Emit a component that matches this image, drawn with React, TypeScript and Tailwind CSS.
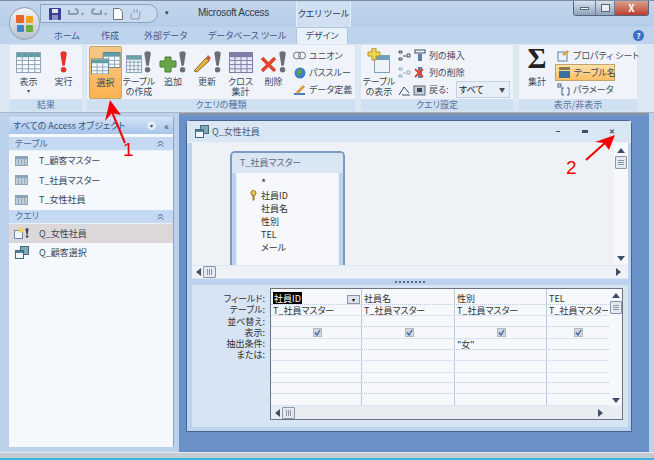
import React from "react";

const font = { fontFamily: '"Noto Sans CJK JP", "Liberation Sans", sans-serif' };

function GridIcon({ w = 25, h = 21, head = "#5f9ea6", line = "#8fa4b8", fill = "#f7fafc" }: { w?: number; h?: number; head?: string; line?: string; fill?: string }) {
  const cols = [0.25, 0.5, 0.75].map((f) => f * w);
  const rows = [0.4, 0.6, 0.8].map((f) => f * h);
  return (
    <svg width={w} height={h} viewBox={`0 0 ${w} ${h}`}>
      <rect x="0.5" y="0.5" width={w - 1} height={h - 1} fill={fill} stroke={line} />
      <rect x="1" y="1" width={w - 2} height={h * 0.2} fill={head} />
      {cols.map((x) => <line key={x} x1={x} x2={x} y1={1} y2={h - 1} stroke={line} />)}
      {rows.map((y) => <line key={y} x1={1} x2={w - 1} y1={y} y2={y} stroke={line} />)}
    </svg>
  );
}

function Bang({ color = "#6b6f78", h = 22 }: { color?: string; h?: number }) {
  return (
    <svg width={h / 2.4} height={h} viewBox="0 0 10 24">
      <path d="M1.5 3 C1.5 -0.5 8.5 -0.5 8.5 3 L6.3 16 H3.7 Z" fill={color} />
      <circle cx="5" cy="20.5" r="3" fill={color} />
    </svg>
  );
}

function SelectIcon({ size = 30 }: { size?: number }) {
  return (
    <svg width={size} height={size * 0.75} viewBox="0 0 32 24">
      <rect x="13" y="0.5" width="18" height="16" fill="#f7fafc" stroke="#59808c" />
      <rect x="13" y="1" width="18" height="4" fill="#5f9ea6" />
      <path d="M19 5V17M25 5V17M13 9H31M13 13H31" stroke="#8fa4b8" />
      <rect x="0.5" y="7.5" width="18" height="16" fill="#f7fafc" stroke="#59808c" />
      <rect x="1" y="8" width="17" height="4" fill="#5f9ea6" />
      <path d="M6.5 12V24M12.5 12V24M1 16H18M1 20H18" stroke="#8fa4b8" />
    </svg>
  );
}

function Big({ w, label, icon, sub, active }: { w: number; label: React.ReactNode; icon: React.ReactNode; sub?: boolean; active?: boolean }) {
  return (
    <div
      style={{ width: w }}
      className={`h-[53px] flex flex-col items-center shrink-0 rounded-[2px] ${active ? "bg-gradient-to-b from-[#f6c887] to-[#fbb24f] border border-[#c2a56a]" : ""}`}
    >
      <div className="h-[27px] flex items-end justify-center gap-px">{icon}</div>
      <div className="text-[9px] leading-[10px] text-[#3d4a5c] text-center mt-[4px] whitespace-pre">{label}</div>
      {sub && <div className="text-[6px] leading-[6px] mt-[1px] text-[#3d4a5c]">▾</div>}
    </div>
  );
}

function Group({ w, label, children, ml = 0 }: { w: number; label: string; children: React.ReactNode; ml?: number }) {
  return (
    <div style={{ width: w, marginLeft: ml }} className="h-[68px] flex flex-col bg-[#f0f4fa] rounded-[2px] border border-[#dbe5f2] shrink-0">
      <div className="flex-1 flex items-start pt-px min-h-0">{children}</div>
      <div className="h-[12px] bg-[#d0e0f3] text-[9px] leading-[12px] text-center text-[#56709a]">{label}</div>
    </div>
  );
}

function SmallRow({ icon, label, className = "" }: { icon: React.ReactNode; label: string; className?: string }) {
  return (
    <div className={`flex items-center gap-[3px] h-[17px] text-[9px] text-[#3d4a5c] whitespace-nowrap ${className}`}>
      <span className="w-[13px] h-[13px] flex items-center justify-center shrink-0">{icon}</span>
      {label}
    </div>
  );
}

function Section({ label }: { label: string }) {
  return (
    <div className="h-[14px] bg-[#c5daf2] flex items-center justify-between pl-[6px] pr-[9px] text-[9px] text-[#4a6a9a] border-b border-white/60">
      {label}
      <svg width="7" height="7" viewBox="0 0 7 7" fill="none" stroke="#3b5a8a"><path d="M1 3.5L3.5 1L6 3.5M1 6.5L3.5 4L6 6.5" /></svg>
    </div>
  );
}

function NavItem({ label, icon, active, pl = 24 }: { label: string; icon?: React.ReactNode; active?: boolean; pl?: number }) {
  return (
    <div className={`h-[19.5px] flex items-center text-[9px] text-[#3a4658] ${active ? "bg-[#dcd8da]" : ""}`}>
      <span style={{ width: pl + 6 }} className="flex justify-center shrink-0 pr-[5px]">{icon}</span>
      {label}
    </div>
  );
}

function MiniWin() {
  return (
    <svg width="14" height="13" viewBox="0 0 14 13">
      <rect x="5.5" y="0.5" width="8" height="8" fill="#7fa9b8" stroke="#446a80" />
      <rect x="0.5" y="4.5" width="8" height="8" fill="#f5f8fb" stroke="#446a80" />
      <rect x="1" y="5" width="7" height="2" fill="#4f7f94" />
    </svg>
  );
}

function Key() {
  return (
    <svg width="7" height="11" viewBox="0 0 7 11">
      <circle cx="3.5" cy="3" r="2.6" fill="#e7c65a" stroke="#9a7d24" />
      <path d="M3.5 5V10.5" stroke="#9a7d24" strokeWidth="2" />
    </svg>
  );
}

function Check() {
  return (
    <div className="w-[9px] h-[9px] bg-[#d3d6dc] border border-[#b3b7c0] flex items-center justify-center">
      <svg width="7" height="7" viewBox="0 0 7 7" fill="none" stroke="#3a62a8" strokeWidth="1.3"><path d="M1 3.5L3 6L6 1" /></svg>
    </div>
  );
}

function Thumb({ vertical }: { vertical?: boolean }) {
  return (
    <div className={`bg-[#e4e9f1] border border-[#8b97a8] rounded-[1px] flex items-center justify-center ${vertical ? "w-[12px] h-[13px] flex-col gap-px" : "w-[13px] h-[12px] gap-px"}`}>
      {[0, 1, 2].map((i) => <span key={i} className={vertical ? "w-[6px] h-px bg-[#8b97a8]" : "h-[6px] w-px bg-[#8b97a8]"} />)}
    </div>
  );
}

const Tri = ({ d }: { d: "l" | "r" | "u" | "d" }) => {
  const p = { l: "M6 0V8L1 4Z", r: "M2 0V8L7 4Z", u: "M0 6H8L4 1Z", d: "M0 2H8L4 7Z" }[d];
  return <svg width="8" height="8" viewBox="0 0 8 8"><path d={p} fill="#3f4f6b" /></svg>;
};

const rows = [
  ["社員ID", "社員名", "性別", "TEL"],
  ["T_社員マスター", "T_社員マスター", "T_社員マスター", "T_社員マスター"],
];
const labels = ["フィールド:", "テーブル:", "並べ替え:", "表示:", "抽出条件:", "または:"];
const colW = [91, 93, 92, 61];

function Cells({ h, children, dotted }: { h: number; children?: (i: number) => React.ReactNode; dotted?: boolean }) {
  return (
    <div style={{ height: h }} className={`flex border-b ${dotted ? "border-dotted border-[#b9c9e0]" : "border-[#d7e3f3]"}`}>
      {colW.map((w, i) => (
        <div key={i} style={{ width: w }} className="shrink-0 border-r border-[#b7cbe4] last:border-r-0 relative overflow-hidden whitespace-nowrap pl-[2px] text-[9px] leading-[11px] text-[#333]">
          {children?.(i)}
        </div>
      ))}
    </div>
  );
}

export default function App() {
  return (
    <div style={font} className="relative w-[654px] h-[460px] overflow-hidden bg-[#bcd2ec] flex flex-col [font-feature-settings:'palt']">
      {/* title bar */}
      <div className="h-[27px] shrink-0 flex items-start border-t border-[#7c8ea6] bg-gradient-to-b from-[#c3d6ec] to-[#b5cde9]">
        <div className="ml-[40px] mt-[3px] w-[118px] h-[19px] rounded-r-full border border-[#8ba3c2] bg-[#c9daee] flex items-center gap-[6px] pl-[8px]">
          <svg width="12" height="12" viewBox="0 0 12 12"><rect width="12" height="12" rx="1" fill="#3a3f96" /><rect x="3" y="1" width="6" height="4" fill="#dfe6f2" /><rect x="3" y="7" width="6" height="5" fill="#8a90c8" /></svg>
          <svg width="13" height="11" viewBox="0 0 13 11" fill="none" stroke="#8a9cb5" strokeWidth="2"><path d="M2 2V6H8M8 6C12 6 12 1 8 1" /></svg>
          <span className="text-[6px] text-[#8a9cb5] -ml-[5px]">▾</span>
          <svg width="13" height="11" viewBox="0 0 13 11" fill="none" stroke="#8a9cb5" strokeWidth="2"><path d="M11 2V6H5M5 6C1 6 1 1 5 1" /></svg>
          <span className="text-[6px] text-[#8a9cb5] -ml-[5px]">▾</span>
          <svg width="10" height="12" viewBox="0 0 10 12"><path d="M.5.5H6.5L9.5 3.5V11.5H.5Z" fill="#fbfcfd" stroke="#6b7686" /></svg>
          <svg width="13" height="12" viewBox="0 0 13 12" fill="none" stroke="#8a9cb5"><path d="M2 5L2 11H10L11 3M5 5V1M8 5V1" /></svg>
        </div>
        <span className="text-[7px] text-[#2f3e55] ml-[7px] mt-[6px]">▾</span>
        <div className="w-[71px] ml-[29px] mt-[4px] text-[10px] leading-[16px] tracking-[-0.25px] text-[#2d3b4f] whitespace-nowrap" style={{ fontFamily: '"Liberation Sans", sans-serif' }}>Microsoft Access</div>
        <div className="ml-[27px] w-[55px] h-[26px] mt-px bg-[#d0dff1] border-x border-[#e6eef8] text-[9px] leading-[24px] text-center text-[#2d3b4f] whitespace-nowrap">クエリ ツール</div>
        <div className="ml-[222px] w-[76px] h-[15px] flex rounded-b-[3px] overflow-hidden border border-t-0 border-[#56657a]">
          <div className="w-[22px] bg-gradient-to-b from-[#d7e1ec] to-[#8fa3bc] flex items-center justify-center border-r border-[#6d7d92]"><span className="w-[9px] h-[3px] bg-white border border-[#56657a]" /></div>
          <div className="w-[19px] bg-gradient-to-b from-[#d7e1ec] to-[#8fa3bc] flex items-center justify-center border-r border-[#6d7d92]"><span className="w-[9px] h-[8px] bg-white/70 border border-[#56657a]" /></div>
          <div className="flex-1 bg-gradient-to-b from-[#d9a090] to-[#bb3a2c] flex items-center justify-center text-white text-[10px] leading-none font-bold">X</div>
        </div>
      </div>

      {/* tabs */}
      <div className="h-[17px] shrink-0 flex items-center text-[9px] text-[#3c5a8c] bg-[#bfd3ec] relative whitespace-nowrap">
        <span className="ml-[54px] w-[24px]">ホーム</span>
        <span className="ml-[23px] w-[19px]">作成</span>
        <span className="ml-[24px] w-[42px]">外部データ</span>
        <span className="ml-[22px] w-[72px]">データベース ツール</span>
        <div className="ml-[16px] w-[52px] h-[17px] bg-[#e8f0f8] border border-b-0 border-[#b0c6de] rounded-t-[2px] text-center leading-[16px] text-[#2f4a75]">デザイン</div>
        <div className="ml-auto mr-[10px] w-[11px] h-[11px] rounded-full bg-[#3a70c4] text-white text-[8px] leading-[11px] text-center font-bold">?</div>
      </div>

      {/* ribbon */}
      <div className="h-[69px] shrink-0 flex pl-[9px] bg-[#dde8f5] border-b border-[#a9b5c4]">
        <Group w={74} label="結果">
          <Big w={37} sub label="表示" icon={<GridIcon />} />
          <Big w={33} label="実行" icon={<Bang color="#e4332a" />} />
        </Group>
        <Group w={270} ml={3} label="クエリの種類">
          <div className="w-[2px]" />
          <Big w={33} active label="選択" icon={<SelectIcon />} />
          <Big w={34} label={"テーブル\nの作成"} icon={<><GridIcon w={16} h={18} /><Bang /></>} />
          <Big w={34} label="追加" icon={<><svg width="18" height="18" viewBox="0 0 18 18"><path d="M6 2H12V6H17V12H12V17H6V12H1V6H6Z" fill="#69a84a" stroke="#4a7d31" /></svg><Bang /></>} />
          <Big w={34} label="更新" icon={<><svg width="20" height="20" viewBox="0 0 20 20"><path d="M2 18L14 5L17 8L5 19Z" fill="#e6b53f" stroke="#8a6a20" /><path d="M14 5L16 2L19 5L17 8Z" fill="#d05a4a" /></svg><Bang /></>} />
          <Big w={33} label={"クロス\n集計"} icon={<GridIcon w={24} h={21} head="#7d7fa8" fill="#eceaf3" line="#7d7fa8" />} />
          <Big w={33} label="削除" icon={<><svg width="17" height="17" viewBox="0 0 17 17"><path d="M2 2L15 15M15 2L2 15" stroke="#e0452e" strokeWidth="3.5" /></svg><Bang /></>} />
          <div className="flex flex-col pt-[1px] ml-[3px]">
            <SmallRow label="ユニオン" icon={<svg width="13" height="9" fill="none" stroke="#6b7686"><circle cx="4" cy="4.5" r="3.5" /><circle cx="9" cy="4.5" r="3.5" /></svg>} />
            <SmallRow label="パススルー" icon={<svg width="12" height="12"><circle cx="6" cy="6" r="5.5" fill="#3d7fc4" /><path d="M3 3L7 2L8 6L4 9Z" fill="#5fa848" /></svg>} />
            <SmallRow label="データ定義" icon={<svg width="13" height="12"><path d="M1 11H12V9H1Z" fill="#3d7fc4" /><path d="M3 8L10 1L12 3L5 10Z" fill="#d89a3a" /></svg>} />
          </div>
        </Group>
        <Group w={154} ml={4} label="クエリ設定">
          <Big w={36} label={"テーブル\nの表示"} icon={<svg width="24" height="25" viewBox="0 0 24 25"><rect x="7.5" y="7.5" width="15" height="17" fill="#eef3f8" stroke="#7ea0b8" /><rect x="8" y="8" width="14" height="4" fill="#6f9fc0" /><path d="M5 0H9V4H13V8H9V12H5V8H1V4H5Z" fill="#f2d44e" stroke="#b29326" /></svg>} />
          <div className="flex flex-col pt-[1px]">
            <div className="flex">
              <div className="w-[15px] flex flex-col">
                {[0, 1, 2].map((i) => <span key={i} className="h-[17px] flex items-center justify-center">
                  <svg width="13" height="12" viewBox="0 0 13 12" fill="none" stroke={i === 1 ? "#9aa9bb" : "#3d4a5c"}>{i === 2 ? <path d="M1 11L6 3L11 9M4 11H12" /> : <path d="M1 1H4V3H1ZM1 8H4V10H1ZM5 6H8M9 4H12V7H9Z" />}</svg>
                </span>)}
              </div>
              <div className="flex flex-col">
                <SmallRow className="ml-[1px]" label="列の挿入" icon={<svg width="12" height="13" viewBox="0 0 12 13"><rect x="1" y="1" width="10" height="3" fill="none" stroke="#3d4a5c" /><rect x="4" y="5" width="4" height="7" fill="#5b7fae" /></svg>} />
                <SmallRow className="ml-[1px]" label="列の削除" icon={<svg width="12" height="13" viewBox="0 0 12 13"><rect x="4" y="1" width="4" height="11" fill="#5b7fae" /><path d="M1 3L9 11M9 3L1 11" stroke="#e0452e" strokeWidth="2" /></svg>} />
                <div className="flex items-center h-[17px]">
                  <SmallRow className="ml-[1px] w-[36px]" label="戻る:" icon={<svg width="13" height="12" viewBox="0 0 13 12"><rect x="1" y="2" width="11" height="9" fill="#c5ced8" stroke="#5c6a7c" /><rect x="4" y="4" width="5" height="4" fill="#3d4a5c" /></svg>} />
                  <div className="ml-[7px] w-[54px] h-[17px] bg-[#e6eef8] border border-[#c1d2e8] flex items-center justify-between pl-[2px] pr-[4px] text-[9px] text-[#222]">すべて<span className="text-[6px] text-[#3d4a5c]">▼</span></div>
                </div>
              </div>
            </div>
          </div>
        </Group>
        <Group w={120} ml={4} label="表示/非表示">
          <Big w={36} label="集計" icon={<span className="text-[29px] leading-[29px] text-[#222] font-bold" style={{ fontFamily: '"Liberation Serif", serif' }}>Σ</span>} />
          <div className="flex flex-col pt-[1px]">
            <SmallRow className="px-[2px]" label="プロパティ シート" icon={<svg width="13" height="13" viewBox="0 0 13 13"><rect x="1" y="3" width="9" height="9" fill="#eef3f8" stroke="#5c7fa8" /><path d="M5 5L11 1L12 3L7 7Z" fill="#d8a63a" /></svg>} />
            <SmallRow className="px-[2px] w-[60px] bg-gradient-to-b from-[#fce0a8] to-[#fbbf63] border border-[#c2a56a]" label="テーブル名" icon={<svg width="13" height="13" viewBox="0 0 13 13"><rect x="1" y="5" width="11" height="7" fill="#3d6f9e" /><rect x="1" y="1" width="11" height="3" fill="#8a7a50" /></svg>} />
            <SmallRow className="px-[2px]" label="パラメータ" icon={<svg width="13" height="13" viewBox="0 0 13 13" fill="none" stroke="#3d5a8a"><rect x="1" y="1" width="3" height="3" /><path d="M7 5H5V12H7M10 5H12V12H10" /></svg>} />
          </div>
        </Group>
      </div>

      {/* body */}
      <div className="flex-1 flex pl-[9px] min-h-0 bg-[#bcd2ec]">
        <div className="w-[165px] mt-[4px] h-[330px] bg-[#f5f8fc] border-r border-[#8aa3c4] flex flex-col shrink-0">
          <div className="h-[17px] bg-gradient-to-b from-[#d3e3f6] to-[#a8c5ea] flex items-center text-[9px] text-[#38557f] pl-[4px] whitespace-nowrap">
            すべての Access オブジェクト
            <span className="ml-auto w-[9px] h-[9px] rounded-full bg-[#e2ebf6] text-[6px] leading-[9px] text-center text-[#33466a]">▾</span>
            <span className="ml-[8px] mr-[4px] text-[10px] text-[#33466a]">«</span>
          </div>
          <div className="h-[3px]" />
          <Section label="テーブル" />
          <NavItem label="T_顧客マスター" icon={<GridIcon w={13} h={10} head="#8aa3bd" />} />
          <NavItem label="T_社員マスター" icon={<GridIcon w={13} h={10} head="#8aa3bd" />} />
          <NavItem label="T_女性社員" icon={<GridIcon w={13} h={10} head="#8aa3bd" />} />
          <Section label="クエリ" />
          <NavItem active label="Q_女性社員" pl={24} icon={<span className="flex items-center gap-px"><svg width="10" height="12" viewBox="0 0 10 12"><rect x=".5" y="3.5" width="8" height="8" fill="#f3f6fa" stroke="#6b86a6" /><circle cx="7" cy="3" r="2.6" fill="#f0d860" /></svg><Bang color="#3c4350" h={10} /></span>} />
          <NavItem label="Q_顧客選択" icon={<MiniWin />} />
        </div>

        <div className="flex-1 flex flex-col min-w-0 ml-[5px]">
          <div className="flex-1 min-h-0 bg-[#6a90c8] pl-[7px] pt-[5px] pr-[17px] mr-[5px] border-t-2 border-[#8892a0]">
            <div className="h-[312px] bg-[#dce8f5] border border-[#47628c] rounded-t-[5px] flex flex-col">
              <div className="h-[22px] shrink-0 bg-[#d9e6f4] flex items-center pl-[8px] text-[9px] text-[#4a5b74] border-b border-[#eaf1f9]">
                <MiniWin /><span className="ml-[3px]">Q_女性社員</span>
                <span className="ml-auto w-[4px] h-px bg-[#3f4f6b]" />
                <span className="ml-[22px] w-[6px] h-[3px] border border-t-2 border-[#3f4f6b]" />
                <span className="ml-[21px] mr-[16px] text-[7px] font-bold text-[#3f4f6b]">✕</span>
              </div>
              <div className="flex-1 flex flex-col pl-[5px] pr-[3px] pb-[4px] bg-[#bdd2ee] min-h-0">
                <div className="h-[122px] bg-[#eef2f6] flex shrink-0 overflow-hidden">
                  <div className="flex-1 pl-[38px] pt-[8px] min-w-0">
                    <div className="w-[115px] h-[116px] bg-[#bdd2ee] border-2 border-b-0 border-[#7c9bc4] rounded-t-[5px] flex flex-col px-[4px]">
                      <div className="h-[20px] text-[9px] leading-[20px] text-[#5a6a80] bg-[#d9e6f4] -mx-[4px] pl-[8px] rounded-t-[3px] shrink-0">T_社員マスター</div>
                      <div className="flex-1 bg-[#f7f8fb] pl-[24px] pt-[3px] text-[9px] leading-[13px] text-[#333] relative border-x border-[#e6eef8]">
                        <div className="text-[11px]">*</div>
                        <div className="relative"><span className="absolute -left-[11px] top-[1px]"><Key /></span>社員ID</div>
                        <div>社員名</div>
                        <div>性別</div>
                        <div>TEL</div>
                        <div>メール</div>
                      </div>
                    </div>
                  </div>
                  <div className="w-[14px] shrink-0 bg-[#f6f8fb] flex flex-col items-center pt-[4px]">
                    <Tri d="u" />
                    <div className="mt-[1px]"><Thumb vertical /></div>
                    <div className="mt-auto mb-[3px]"><Tri d="d" /></div>
                  </div>
                </div>
                <div className="h-[14px] shrink-0 bg-[#eef2f6] flex items-center pl-[3px] pr-[6px] border-y border-[#dce8f5]">
                  <Tri d="l" />
                  <Thumb />
                  <div className="ml-auto"><Tri d="r" /></div>
                </div>
                <div className="h-[6px] shrink-0 flex justify-center items-center bg-[#bdd2ee]">
                  <span className="w-[30px] border-t-2 border-dotted border-[#5a6a80]" />
                </div>
                <div className="flex-1 min-h-0 bg-[#d6e4f4] flex pt-[3px] pr-[6px]">
                  <div className="w-[78px] shrink-0 text-right text-[9px] leading-[11px] text-[#333] pt-[5px] pr-[5px] whitespace-nowrap">
                    {labels.map((l) => <div key={l} className="h-[11.3px]">{l}</div>)}
                  </div>
                  <div className="w-[353px] h-[132px] bg-[#f6f8fb] border border-[#6b7382] flex flex-col shrink-0">
                    <div className="flex flex-1 min-h-0">
                      <div className="w-[338px] shrink-0 overflow-hidden">
                        <Cells h={16} dotted>{(i) => i === 0
                          ? <div className="relative pt-[4px]"><span className="bg-black text-white px-[1px]">{rows[0][0]}</span><span className="absolute right-[1px] top-[6px] w-[13px] h-[9px] bg-[#dde3ec] border border-[#8b97a8] flex items-center justify-center text-[6px] leading-none text-black">▾</span></div>
                          : <div className="pt-[4px]">{rows[0][i]}</div>}</Cells>
                        <Cells h={11}>{(i) => rows[1][i]}</Cells>
                        <Cells h={11} dotted />
                        <Cells h={12}>{() => <div className="h-full flex items-center justify-center"><Check /></div>}</Cells>
                        <Cells h={11} dotted>{(i) => i === 2 ? '"女"' : null}</Cells>
                        <Cells h={11} />
                        <Cells h={12} />
                        <Cells h={10} dotted />
                        <Cells h={11} dotted />
                        <Cells h={12} />
                      </div>
                      <div className="w-[13px] shrink-0 flex flex-col items-center pt-[3px] bg-[#f6f8fb]">
                        <Tri d="u" />
                        <div className="mt-[1px]"><Thumb vertical /></div>
                        <div className="mt-auto mb-[2px]"><Tri d="d" /></div>
                      </div>
                    </div>
                    <div className="h-[13px] shrink-0 bg-[#e9edf2] flex items-center pl-[3px] pr-[18px]">
                      <Tri d="l" />
                      <Thumb />
                      <div className="ml-auto"><Tri d="r" /></div>
                    </div>
                  </div>
                </div>
              </div>
            </div>
          </div>
        </div>
      </div>

      {/* status strip */}
      <div className="h-[6px] shrink-0 bg-[#c6ccd4] border-t border-[#e3e6ea]" />
      <div className="h-[2px] shrink-0 bg-[#38b6d8]" />

      {/* Office button */}
      <div className="absolute left-[9px] top-[7px] w-[31px] h-[33px] rounded-full border border-[#8e9fb5] bg-gradient-to-b from-[#f3f5f7] to-[#b6c0cc] flex items-center justify-center">
        <svg width="18" height="18" viewBox="0 0 18 18">
          <rect x="0" y="0" width="8" height="8" rx="1" fill="#e8622c" />
          <rect x="10" y="1" width="7" height="7" rx="1" fill="#f0a21e" />
          <rect x="1" y="10" width="7" height="7" rx="1" fill="#3f84c8" />
          <rect x="10" y="10" width="7" height="7" rx="1" fill="#6cae3c" />
        </svg>
      </div>

      {/* annotation arrows */}
      <svg className="absolute left-0 top-0 pointer-events-none" width="654" height="460">
        <path d="M125 143L112 112" stroke="#f40000" strokeWidth="2" />
        <path d="M110 100L121 115L112 113L105 121Z" fill="#f40000" />
        <path d="M586 160L606 142" stroke="#f40000" strokeWidth="2" />
        <path d="M615 135L609 150L604 143L595 142Z" fill="#f40000" />
      </svg>
      <div className="absolute left-[123px] top-[139px] text-[19px] leading-[22px] text-[#f00000]" style={{ fontFamily: '"Liberation Sans", sans-serif' }}>1</div>
      <div className="absolute left-[566px] top-[157px] text-[19px] leading-[22px] text-[#f00000]" style={{ fontFamily: '"Liberation Sans", sans-serif' }}>2</div>
    </div>
  );
}
